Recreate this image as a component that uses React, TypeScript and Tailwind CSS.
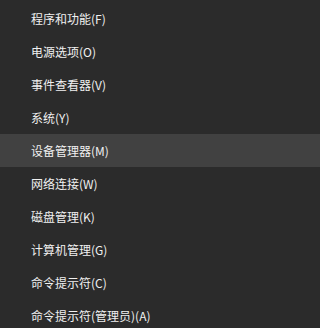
import React from "react";

const items = [
  "程序和功能(F)",
  "电源选项(O)",
  "事件查看器(V)",
  "系统(Y)",
  "设备管理器(M)",
  "网络连接(W)",
  "磁盘管理(K)",
  "计算机管理(G)",
  "命令提示符(C)",
  "命令提示符(管理员)(A)",
];

export default function App() {
  return (
    <div
      className="w-full min-w-[205px] h-[328px] overflow-hidden bg-[#2b2b2b] pt-[2px] flex flex-col"
      style={{ fontFamily: '"Microsoft YaHei", "Noto Sans CJK SC", "Noto Sans", sans-serif' }}
    >
      {items.map((t, i) => (
        <div
          key={t}
          className={
            i === 4
              ? "h-[33px] shrink-0 flex items-center pl-[31px] bg-[#414141] text-[12px] text-[#f0f0f0]"
              : "h-[33px] shrink-0 flex items-center pl-[31px] text-[12px] text-[#f0f0f0]"
          }
        >
          {t}
        </div>
      ))}
    </div>
  );
}
